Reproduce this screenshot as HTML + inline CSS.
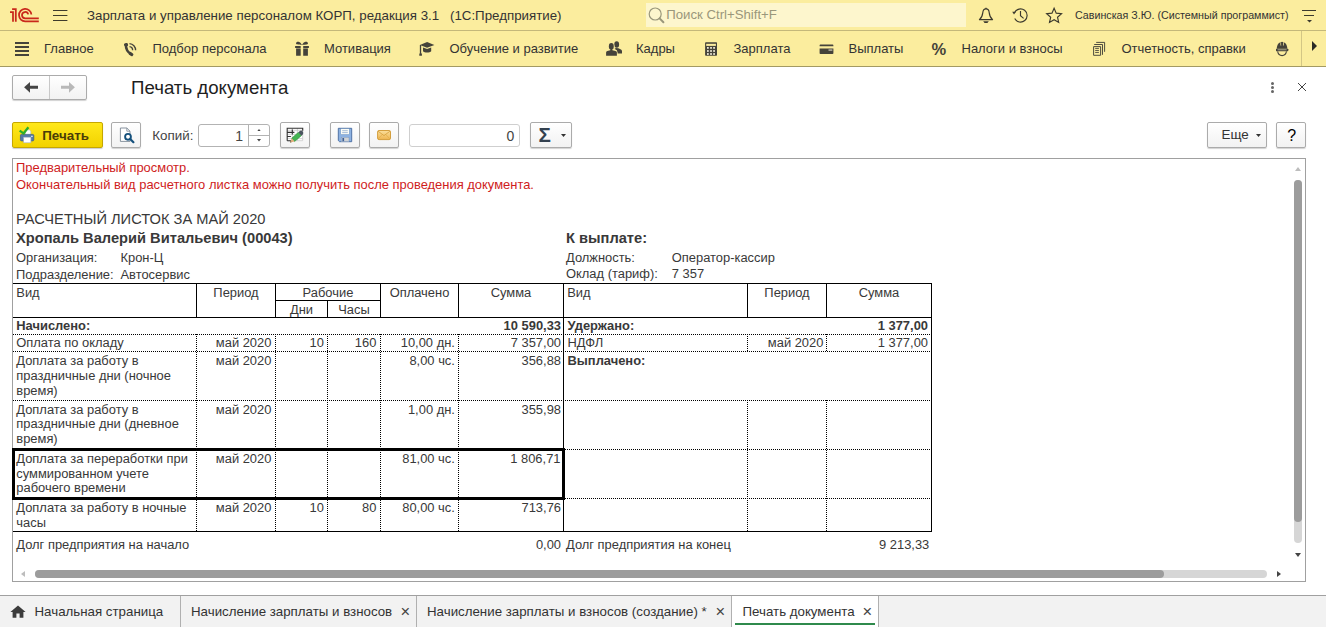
<!DOCTYPE html>
<html lang="ru">
<head>
<meta charset="utf-8">
<title>Печать документа</title>
<style>
*{box-sizing:border-box;margin:0;padding:0}
html,body{width:1326px;height:627px;overflow:hidden;background:#fff}
body{font-family:"Liberation Sans",Arial,sans-serif;color:#333;position:relative;font-size:13px}
.abs{position:absolute}
.t{position:absolute;white-space:nowrap;line-height:1}
/* top bars */
#top{position:absolute;left:0;top:0;width:1326px;height:30px;background:#fbed9e}
#topline{position:absolute;left:0;top:30px;width:1326px;height:1px;background:#c4b87a}
#nav{position:absolute;left:0;top:31px;width:1326px;height:35px;background:#fbed9e}
#navline{position:absolute;left:0;top:66px;width:1326px;height:1px;background:#a39a63}
#search{position:absolute;left:646px;top:3px;width:320px;height:24px;background:#fdf6cd}
.nt{position:absolute;white-space:nowrap;font-size:13px;line-height:15px;top:41px;color:#333}
/* buttons */
.btn{position:absolute;border:1px solid #ababab;border-radius:2px;background:linear-gradient(#ffffff,#f2f2f2);box-shadow:0 1px 1px rgba(0,0,0,.18)}
.inp{position:absolute;border:1px solid #b3b3b3;border-radius:3px;background:#fff}
/* doc */
#panel{position:absolute;left:12px;top:158px;width:1294px;height:424px;border:1px solid #a0a0a0;background:#fff}
.d{position:absolute;white-space:nowrap;font-size:12.92px;line-height:15px;color:#393939}
.r{text-align:right}
.b{font-weight:bold}
.hl{position:absolute;height:1px;background:#000}
.vl{position:absolute;width:1px;background:#000}
.hd{position:absolute;height:1px;background-image:linear-gradient(90deg,#000 50%,transparent 50%);background-size:2px 1px}
.vd{position:absolute;width:1px;background-image:linear-gradient(180deg,#000 50%,transparent 50%);background-size:1px 2px}
/* tabs */
#tabs{position:absolute;left:0;top:595px;width:1326px;height:32px;background:#f2f2f2;border-top:1px solid #a0a0a0}
.tt{position:absolute;white-space:nowrap;font-size:13.3px;line-height:15px;top:604px;color:#333}
.tx{position:absolute;white-space:nowrap;font-size:16.5px;line-height:16px;top:603.3px;color:#444}
.tdiv{position:absolute;top:596px;width:1px;height:31px;background:#b0b0b0}
</style>
</head>
<body>
<!-- TOP BAR -->
<div id="top"></div><div id="topline"></div>
<div id="nav"></div><div id="navline"></div>
<div id="search"></div>

<!-- TOPBAR-CONTENT -->
<svg class="abs" style="left:9px;top:7px" width="32" height="16" viewBox="0 0 32 16">
 <g fill="none" stroke="#c9281b" stroke-width="1.75">
  <path d="M3.1 2 H6.8 V14.75"/>
  <path d="M1 5.05 H4 V14.75"/>
  <path d="M22.37 7.5 A6.2 6.2 0 1 0 16.2 14.3 H29.8"/>
  <path d="M19.2 7.39 A3.15 3.15 0 1 0 16.15 11.3 H29.8"/>
 </g>
</svg>
<svg class="abs" style="left:53px;top:8px" width="15" height="15" viewBox="0 0 15 15"><path d="M0 2.5 H14.4 M0 7.5 H14.4 M0 12.5 H14.4" stroke="#3e3b2c" stroke-width="1.15"/></svg>
<div class="t" style="left:87px;top:8px;font-size:13.3px;line-height:15px;color:#333">Зарплата и управление персоналом КОРП, редакция 3.1</div>
<div class="t" style="left:450px;top:8px;font-size:13.3px;line-height:15px;color:#333">(1С:Предприятие)</div>
<svg class="abs" style="left:648px;top:5.5px" width="18" height="18" viewBox="0 0 18 18"><circle cx="7.2" cy="8" r="6" fill="none" stroke="#9a977b" stroke-width="1.2"/><path d="M11.6 12.4 L15.4 16.2" stroke="#9a977b" stroke-width="2" stroke-linecap="round"/></svg>
<div class="t" style="left:666.3px;top:6.8px;font-size:13.2px;line-height:15px;color:#9a977b">Поиск Ctrl+Shift+F</div>
<!-- bell -->
<svg class="abs" style="left:977px;top:7px" width="18" height="18" viewBox="0 0 18 18"><path d="M9 1.9 C6.9 1.9 6 3.4 5.8 5.6 C5.5 8.8 4.9 10.6 2.4 12.6 L15.6 12.6 C13.1 10.6 12.5 8.8 12.2 5.6 C12 3.4 11.1 1.9 9 1.9 Z" fill="none" stroke="#3c3a2e" stroke-width="1.15" stroke-linejoin="round"/><path d="M9 0.8 V2" stroke="#3c3a2e" stroke-width="1.3"/><path d="M6.2 14.3 L11.8 14.3 L10.4 16 L7.6 16 Z" fill="#3c3a2e"/></svg>
<!-- history -->
<svg class="abs" style="left:1011px;top:6px" width="20" height="20" viewBox="0 0 20 20"><path d="M3.6 6.6 A6.6 6.6 0 1 1 3.7 12.6" fill="none" stroke="#3c3a2e" stroke-width="1.15"/><path d="M1.2 5.8 L5 5.8 L3 8.6 Z" fill="#3c3a2e"/><path d="M9.5 5 L9.5 9.8 L12.6 12.4" fill="none" stroke="#3c3a2e" stroke-width="1.15"/></svg>
<!-- star -->
<svg class="abs" style="left:1045px;top:6px" width="19" height="19" viewBox="0 0 19 19"><path d="M9.10 2.30 L11.22 7.19 L16.52 7.69 L12.52 11.21 L13.68 16.41 L9.10 13.70 L4.52 16.41 L5.68 11.21 L1.68 7.69 L6.98 7.19 Z" fill="none" stroke="#3c3a2e" stroke-width="1.15" stroke-linejoin="miter"/></svg>
<div class="t" style="left:1075px;top:9px;font-size:10.7px;line-height:13px;color:#333">Савинская З.Ю. (Системный программист)</div>
<div class="abs" style="left:1302px;top:10px;width:14px;height:1px;background:#3c3a2e"></div>
<div class="abs" style="left:1304px;top:15px;width:10px;height:1px;background:#3c3a2e"></div>
<svg class="abs" style="left:1306.5px;top:20px" width="5" height="2.6" viewBox="0 0 5 2.6"><path d="M0 0 L5 0 L2.5 2.6 Z" fill="#3c3a2e"/></svg>

<!-- NAV-CONTENT -->
<!-- list icon -->
<div class="abs" style="left:15px;top:42px;width:14px;height:2px;background:#45433a"></div>
<div class="abs" style="left:15px;top:46px;width:14px;height:2px;background:#45433a"></div>
<div class="abs" style="left:15px;top:50px;width:14px;height:2px;background:#45433a"></div>
<div class="abs" style="left:15px;top:54px;width:14px;height:2px;background:#45433a"></div>
<div class="nt" style="left:44px">Главное</div>
<!-- phone -->
<svg class="abs" style="left:123px;top:42px" width="15" height="15" viewBox="0 0 15 15"><path d="M3 2.8 Q2.6 8.6 8 12" fill="none" stroke="#45433a" stroke-width="2.5" stroke-linecap="round"/><rect x="1.1" y="1.2" width="3.9" height="3.1" rx="1" fill="#45433a" transform="rotate(-18 3 2.8)"/><rect x="5.7" y="10.5" width="4.7" height="3.1" rx="1.1" fill="#45433a" transform="rotate(32 8 12)"/><path d="M6.5 1.6 A6.5 6.5 0 0 1 12.6 8.3" fill="none" stroke="#45433a" stroke-width="1.35"/><path d="M6.5 4.6 A3.5 3.5 0 0 1 9.6 8.2" fill="none" stroke="#45433a" stroke-width="1.35"/></svg>
<div class="nt" style="left:152.5px">Подбор персонала</div>
<!-- gift -->
<svg class="abs" style="left:295px;top:41px" width="14" height="15" viewBox="0 0 14 15"><path d="M0.1 4.9 H5.7 V6.9 H0.1 Z M8.2 4.9 H13.9 V6.9 H8.2 Z M1.1 7.7 H5.7 V14.7 H1.1 Z M8.2 7.7 H12.9 V14.7 H8.2 Z" fill="#45433a"/><path d="M1.1 6.9 H5.7 V7.7 H1.1 Z M8.2 6.9 H12.9 V7.7 H8.2 Z" fill="#45433a" opacity="0.55"/><path d="M6.9 3.9 C5.4 3.9 1 4 1 2.3 C1 0.6 3 0.4 4.2 0.9 C5.6 1.5 6.4 2.8 6.9 3.9 Z M7.1 3.9 C8.6 3.9 13 4 13 2.3 C13 0.6 11 0.4 9.8 0.9 C8.4 1.5 7.6 2.8 7.1 3.9 Z" fill="#45433a"/></svg>
<div class="nt" style="left:324px">Мотивация</div>
<!-- grad cap -->
<svg class="abs" style="left:418px;top:41px" width="17" height="15" viewBox="0 0 17 15"><path d="M1.9 3.9 L9.1 1 L16.4 3.9 L9.1 6.8 Z" fill="#45433a"/><path d="M5 6.4 L9.1 8 L13.2 6.4 L13.2 10.2 C12 11.9 6.2 11.9 5 10.2 Z" fill="#45433a"/><path d="M2.5 4 L2.5 12.4" stroke="#45433a" stroke-width="1.3"/><path d="M1.3 14.7 L1.3 12.8 Q2.6 11.4 3.9 12.8 L3.9 14.7 Z" fill="#45433a"/></svg>
<div class="nt" style="left:449.5px">Обучение и развитие</div>
<!-- people -->
<svg class="abs" style="left:606px;top:41px" width="17" height="15" viewBox="0 0 17 15"><ellipse cx="10.7" cy="3.5" rx="2.4" ry="3.3" fill="#45433a"/><path d="M8.6 7.8 L10 7 L12.4 7.2 L15 8.4 Q16 8.9 16 10.2 V12.6 H11 V9.6 Z" fill="#45433a"/><g stroke="#fbed9e" stroke-width="1.4" paint-order="stroke"><ellipse cx="5.3" cy="5.4" rx="2.45" ry="3.3" fill="#45433a"/><path d="M0.1 14.7 V11.6 Q0.1 10.4 1.4 10 L4.2 9.2 L6.4 9.2 L9.4 10 Q10.9 10.4 10.9 11.6 V14.7 Z" fill="#45433a"/></g><rect x="4.3" y="8" width="2" height="2" fill="#45433a"/></svg>
<div class="nt" style="left:636px">Кадры</div>
<!-- calculator -->
<svg class="abs" style="left:705px;top:42px" width="13" height="14" viewBox="0 0 13 14"><rect x="0.1" y="0.2" width="11.9" height="13.5" rx="0.8" fill="#45433a"/><rect x="1.2" y="1.8" width="9.7" height="2.1" fill="#fbed9e"/><rect x="2.0" y="5.1" width="1.75" height="1.6" fill="#fffbe6"/><rect x="2.0" y="8.2" width="1.75" height="1.6" fill="#fffbe6"/><rect x="2.0" y="11.2" width="1.75" height="1.6" fill="#fffbe6"/><rect x="5.15" y="5.1" width="1.75" height="1.6" fill="#fffbe6"/><rect x="5.15" y="8.2" width="1.75" height="1.6" fill="#fffbe6"/><rect x="5.15" y="11.2" width="1.75" height="1.6" fill="#fffbe6"/><rect x="8.2" y="5.1" width="1.75" height="1.6" fill="#fffbe6"/><rect x="8.2" y="8.2" width="1.75" height="1.6" fill="#fffbe6"/><rect x="8.2" y="11.2" width="1.75" height="1.6" fill="#fffbe6"/></svg>
<div class="nt" style="left:733.5px">Зарплата</div>
<!-- card -->
<svg class="abs" style="left:818.5px;top:43.5px" width="15" height="11" viewBox="0 0 15 11"><path d="M1.4 0.6 H13.6 Q14.4 0.6 14.4 1.4 V2.2 H0.6 V1.4 Q0.6 0.6 1.4 0.6 Z M0.6 4.5 H14.4 V9.3 Q14.4 10.1 13.6 10.1 H1.4 Q0.6 10.1 0.6 9.3 Z" fill="#45433a"/><rect x="9.5" y="5.6" width="3.9" height="0.9" fill="#fffbe6"/></svg>
<div class="nt" style="left:848.5px">Выплаты</div>
<div class="t" style="left:931.5px;top:40px;font-size:16.5px;line-height:18px;font-weight:bold;color:#45433a">%</div>
<div class="nt" style="left:961.5px">Налоги и взносы</div>
<!-- docs -->
<svg class="abs" style="left:1092px;top:41px" width="14" height="15" viewBox="0 0 14 15"><g fill="none" stroke="#45433a" stroke-width="0.95"><path d="M4.2 1.4 H12.6 V10.8"/><path d="M2.2 3.5 H10.5 V13.8"/><path d="M1.6 5.6 H8.6 V14.3 H1.6 Z"/><path d="M3.2 7.4 H6.9 M3.2 9.45 H6.9 M3.2 11.45 H6.9" stroke-width="0.9"/></g></svg>
<div class="nt" style="left:1121.5px">Отчетность, справки</div>
<!-- helmet -->
<svg class="abs" style="left:1276px;top:41px" width="13" height="16" viewBox="0 0 13 16"><path d="M0.8 7.8 C0.8 3.6 3 1.1 6.05 1.1 C9.1 1.1 11.3 3.6 11.3 7.8 Z" fill="#45433a"/><path d="M4.8 1.2 V4.5 M7.45 1.2 V4.5" stroke="#fbed9e" stroke-width="0.8"/><rect x="5.3" y="0.9" width="1.7" height="3" fill="#45433a"/><path d="M0.4 7.7 H11.8 Q12.3 7.7 12.3 8.3 V9.6 Q12.3 10.2 11.8 10.2 H0.4 Q-0.1 10.2 -0.1 9.6 V8.3 Q-0.1 7.7 0.4 7.7 Z" fill="#45433a"/><rect x="1.6" y="8.45" width="9" height="0.75" fill="#c9c3a4"/><path d="M1.6 10.4 C2.2 13.2 4 14.6 6.05 14.6 C8.1 14.6 9.9 13.2 10.5 10.4" fill="none" stroke="#45433a" stroke-width="1.1"/></svg>
<div class="abs" style="left:1301px;top:31px;width:1px;height:35px;background:#d3c685"></div>
<svg class="abs" style="left:1312px;top:41px" width="5" height="10" viewBox="0 0 5 10"><path d="M0 0 L5 5 L0 10 Z" fill="#2a2a26"/></svg>

<!-- FORM-HEADER -->
<div class="btn" style="left:12px;top:75px;width:75px;height:25px"></div>
<div class="abs" style="left:49px;top:76px;width:1px;height:23px;background:#c8c8c8"></div>
<svg class="abs" style="left:24px;top:82px" width="14" height="11" viewBox="0 0 14 11"><path d="M6 0 L0.1 5.35 L6 10.7 L6 6.85 L14 6.85 L14 3.85 L6 3.85 Z" fill="#444"/></svg>
<svg class="abs" style="left:60.8px;top:82px" width="14" height="11" viewBox="0 0 14 11"><path d="M8 0 L13.9 5.35 L8 10.7 L8 6.85 L0 6.85 L0 3.85 L8 3.85 Z" fill="#b8b8b8"/></svg>
<div class="t" style="left:131px;top:76.7px;font-size:18.67px;line-height:21px;color:#1e1e1e">Печать документа</div>
<div class="abs" style="left:1271px;top:82px;width:3px;height:3px;border-radius:50%;background:#666"></div>
<div class="abs" style="left:1271px;top:86px;width:3px;height:3px;border-radius:50%;background:#666"></div>
<div class="abs" style="left:1271px;top:90px;width:3px;height:3px;border-radius:50%;background:#666"></div>
<svg class="abs" style="left:1297px;top:82px" width="10" height="10" viewBox="0 0 10 10"><path d="M1 1 L9 9 M9 1 L1 9" stroke="#444" stroke-width="1"/></svg>

<!-- TOOLBAR -->
<div class="abs" style="left:12px;top:122px;width:91px;height:26px;border:1px solid #c6a700;border-radius:2px;background:linear-gradient(#ffe81a,#f2d200);box-shadow:0 1px 1px rgba(0,0,0,.2)"></div>
<!-- printer icon -->
<svg class="abs" style="left:19px;top:126px" width="16" height="18" viewBox="0 0 16 18">
 <path d="M6.2 3.8 H10.4 L11.8 5.2 V9.4 H6.2 Z" fill="#fff" stroke="#a8b4c2" stroke-width="0.6"/>
 <path d="M2.5 8.4 H13.7 Q14.8 8.4 14.8 9.5 V13.8 Q14.8 14.9 13.7 14.9 H2.5 Q1.4 14.9 1.4 13.8 V9.5 Q1.4 8.4 2.5 8.4 Z" fill="#5479a8" stroke="#3b5b86" stroke-width="0.7"/>
 <rect x="4.7" y="11.2" width="7.2" height="5.6" fill="#fff" stroke="#a8b4c2" stroke-width="0.6"/>
 <rect x="12" y="9.8" width="1.8" height="1.1" fill="#d6e4f4"/>
 <path d="M0.6 4.6 L4.6 7.4 L9.4 1.2" fill="none" stroke="#2cae28" stroke-width="2.3"/>
</svg>
<div class="t" style="left:42.2px;top:128px;font-size:13.4px;line-height:15px;font-weight:bold;color:#4a3c08">Печать</div>
<div class="btn" style="left:111px;top:122px;width:30px;height:26px"></div>
<svg class="abs" style="left:119px;top:127px" width="17" height="17" viewBox="0 0 17 17">
 <path d="M1.4 1 H7.8 L11 4.2 V14.4 H1.4 Z" fill="#fff" stroke="#7b8794" stroke-width="0.9"/>
 <path d="M7.8 1 V4.2 H11" fill="none" stroke="#7b8794" stroke-width="0.8"/>
 <circle cx="9" cy="9.8" r="2.9" fill="#fff" stroke="#14507c" stroke-width="1.9"/>
 <path d="M11.2 12 L14.4 15.2" stroke="#14507c" stroke-width="2.2" stroke-linecap="round"/>
</svg>
<div class="t" style="left:152.3px;top:128px;font-size:13.4px;line-height:15px;color:#444">Копий:</div>
<div class="inp" style="left:198px;top:124px;width:72px;height:23px"></div>
<div class="abs" style="left:248px;top:125px;width:1px;height:21px;background:#b3b3b3"></div>
<div class="abs" style="left:249px;top:135px;width:20px;height:1px;background:#b3b3b3"></div>
<div class="t" style="left:200px;top:127.5px;width:43px;text-align:right;font-size:14px;line-height:16px;color:#444">1</div>
<svg class="abs" style="left:256.5px;top:128.5px" width="4" height="2.5" viewBox="0 0 4 2.5"><path d="M0 2.5 L2 0 L4 2.5 Z" fill="#444"/></svg>
<svg class="abs" style="left:256.5px;top:139px" width="4" height="2.5" viewBox="0 0 4 2.5"><path d="M0 0 L4 0 L2 2.5 Z" fill="#444"/></svg>
<div class="btn" style="left:280px;top:122px;width:30px;height:26px"></div>
<div class="btn" style="left:330px;top:122px;width:30px;height:26px"></div>
<div class="btn" style="left:369px;top:122px;width:30px;height:26px"></div>
<div class="inp" style="left:409px;top:124px;width:111px;height:23px;border-color:#cfcfcf"></div>
<div class="t" style="left:420px;top:127.5px;width:94.3px;text-align:right;font-size:14px;line-height:16px;color:#444">0</div>
<div class="btn" style="left:530px;top:122px;width:42px;height:26px"></div>
<div class="t" style="left:538.4px;top:124.2px;font-size:20.6px;line-height:22px;font-weight:bold;color:#33414f">Σ</div>
<svg class="abs" style="left:560.8px;top:134px" width="5" height="3" viewBox="0 0 5 3"><path d="M0 0 L5 0 L2.5 3 Z" fill="#333"/></svg>
<!-- toolbar icons -->
<svg class="abs" style="left:286px;top:126px" width="18" height="18" viewBox="0 0 18 18">
 <rect x="1.2" y="2.2" width="15.5" height="12.5" fill="#fff"/>
 <path d="M1.2 4.3 H16.7 M1.2 8.4 H16.7 M1.2 12.6 H16.7 M11.35 2.2 V14.7 M6.3 2.2 V14.7 M16.7 2.2 V14.7 M1.2 14.7 H16.7" stroke="#c9c9c9" stroke-width="0.8" fill="none"/>
 <path d="M1.2 14.7 V2.2 H16.7 V4.8 M1.2 14.7 H5 M1.2 6.4 H8.4 M1.2 10.5 H4.9 M6.3 3.5 V8.4" fill="none" stroke="#333" stroke-width="1.1"/>
 <path d="M5.68 12.22 L12.48 6.31 L15.36 9.63 L8.56 15.54 Z" fill="#45b552" stroke="#2e8a3a" stroke-width="0.6"/>
 <path d="M12.48 6.31 L14.1 4.87 Q15.6 4 16.6 5.2 Q17.8 6.6 17 8.2 L15.36 9.63 Z" fill="#4b5560"/>
 <path d="M5.68 12.22 L8.56 15.54 L4.1 16.5 Z" fill="#e2b07c"/>
 <path d="M4.1 16.5 L4.6 15.1 L5.5 16.2 Z" fill="#4a3a2a"/>
</svg>
<svg class="abs" style="left:337px;top:127px" width="16" height="16" viewBox="0 0 16 16">
 <path d="M1.3 1.3 H14.7 V14.7 H2.5 L1.3 13.5 Z" fill="#8db2e2" stroke="#45699e" stroke-width="0.9"/>
 <rect x="3.8" y="1.8" width="8.4" height="5.6" fill="#fbfcf6" stroke="#6f8fba" stroke-width="0.4"/>
 <path d="M5.2 3.7 H10.8 M5.2 5.6 H10.8" stroke="#9db6d4" stroke-width="0.9"/>
 <rect x="4.2" y="10.2" width="7.8" height="4.5" fill="#d2d4d6" stroke="#6f8fba" stroke-width="0.4"/>
 <rect x="5.4" y="11" width="1.7" height="3.2" fill="#3f6096"/>
</svg>
<svg class="abs" style="left:376px;top:129px" width="16" height="12" viewBox="0 0 16 12">
 <defs><linearGradient id="mg" x1="0" y1="0" x2="0" y2="1"><stop offset="0" stop-color="#fadf9c"/><stop offset="1" stop-color="#eeb550"/></linearGradient></defs>
 <rect x="1.6" y="1.5" width="12.9" height="9.1" rx="1.3" fill="url(#mg)" stroke="#cf962f" stroke-width="0.9"/>
 <path d="M2 2.2 L8 6.6 L14 2.2" fill="none" stroke="#cf962f" stroke-width="0.7"/>
 <path d="M2 10 L6.2 5.6 M14 10 L9.8 5.6" stroke="#dfa843" stroke-width="0.6"/>
</svg>
<div class="btn" style="left:1207px;top:122px;width:60px;height:26px"></div>
<div class="t" style="left:1221.5px;top:127.4px;font-size:13.4px;line-height:16px;color:#333">Еще</div>
<svg class="abs" style="left:1255.7px;top:134.3px" width="5" height="3" viewBox="0 0 5 3"><path d="M0 0 L5 0 L2.5 3 Z" fill="#333"/></svg>
<div class="btn" style="left:1276px;top:122px;width:30px;height:26px"></div>
<div class="t" style="left:1287.2px;top:126.8px;font-size:16px;line-height:17px;color:#000">?</div>

<!-- PANEL -->
<div id="panel"></div>

<!-- DOC -->
<div class="d" style="top:160.01px;left:16.00px;font-size:12.95px;color:#cf1d1d;">Предварительный просмотр.</div>
<div class="d" style="top:176.71px;left:16.00px;font-size:12.95px;color:#cf1d1d;">Окончательный вид расчетного листка можно получить после проведения документа.</div>
<div class="d" style="top:211.42px;left:16.00px;font-size:14.67px;line-height:17px;">РАСЧЕТНЫЙ ЛИСТОК ЗА МАЙ 2020</div>
<div class="d" style="top:229.92px;left:16.00px;font-size:14.67px;line-height:17px;font-weight:bold;">Хропаль Валерий Витальевич (00043)</div>
<div class="d" style="top:250.02px;left:16.00px;">Организация:</div>
<div class="d" style="top:250.02px;left:120.50px;">Крон-Ц</div>
<div class="d" style="top:266.72px;left:16.00px;">Подразделение:</div>
<div class="d" style="top:266.72px;left:120.50px;">Автосервис</div>
<div class="d" style="top:230.22px;left:566.00px;font-size:14.67px;line-height:17px;font-weight:bold;">К выплате:</div>
<div class="d" style="top:250.02px;left:566.00px;">Должность:</div>
<div class="d" style="top:250.02px;left:671.80px;">Оператор-кассир</div>
<div class="d" style="top:266.32px;left:566.00px;">Оклад (тариф):</div>
<div class="d" style="top:266.32px;left:671.80px;">7 357</div>
<div class="d" style="top:285.02px;left:16.30px;">Вид</div>
<div class="d" style="top:285.02px;left:86.00px;width:300px;text-align:center;">Период</div>
<div class="d" style="top:285.02px;left:178.00px;width:300px;text-align:center;">Рабочие</div>
<div class="d" style="top:302.02px;left:151.50px;width:300px;text-align:center;">Дни</div>
<div class="d" style="top:302.02px;left:204.00px;width:300px;text-align:center;">Часы</div>
<div class="d" style="top:285.02px;left:269.50px;width:300px;text-align:center;">Оплачено</div>
<div class="d" style="top:285.02px;left:361.00px;width:300px;text-align:center;">Сумма</div>
<div class="d" style="top:285.02px;left:567.20px;">Вид</div>
<div class="d" style="top:285.02px;left:637.00px;width:300px;text-align:center;">Период</div>
<div class="d" style="top:285.02px;left:729.00px;width:300px;text-align:center;">Сумма</div>
<div class="d" style="top:317.52px;left:16.30px;font-weight:bold;">Начислено:</div>
<div class="d" style="top:317.52px;left:261.00px;width:300px;text-align:right;font-weight:bold;">10 590,33</div>
<div class="d" style="top:317.52px;left:567.50px;font-weight:bold;">Удержано:</div>
<div class="d" style="top:317.52px;left:628.00px;width:300px;text-align:right;font-weight:bold;">1 377,00</div>
<div class="d" style="top:335.02px;left:16.30px;">Оплата по окладу</div>
<div class="d" style="top:335.02px;left:-28.60px;width:300px;text-align:right;">май 2020</div>
<div class="d" style="top:335.02px;left:23.90px;width:300px;text-align:right;">10</div>
<div class="d" style="top:335.02px;left:76.40px;width:300px;text-align:right;">160</div>
<div class="d" style="top:335.02px;left:154.90px;width:300px;text-align:right;">10,00 дн.</div>
<div class="d" style="top:335.02px;left:261.00px;width:300px;text-align:right;">7 357,00</div>
<div class="d" style="top:335.02px;left:567.50px;">НДФЛ</div>
<div class="d" style="top:335.02px;left:523.40px;width:300px;text-align:right;">май 2020</div>
<div class="d" style="top:335.02px;left:628.00px;width:300px;text-align:right;">1 377,00</div>
<div class="d" style="top:353.32px;left:16.30px;">Доплата за работу в</div>
<div class="d" style="top:368.02px;left:16.30px;">праздничные дни (ночное</div>
<div class="d" style="top:382.72px;left:16.30px;">время)</div>
<div class="d" style="top:353.32px;left:-28.60px;width:300px;text-align:right;">май 2020</div>
<div class="d" style="top:353.32px;left:154.90px;width:300px;text-align:right;">8,00 чс.</div>
<div class="d" style="top:353.32px;left:261.00px;width:300px;text-align:right;">356,88</div>
<div class="d" style="top:353.32px;left:567.50px;font-weight:bold;">Выплачено:</div>
<div class="d" style="top:401.52px;left:16.30px;">Доплата за работу в</div>
<div class="d" style="top:416.42px;left:16.30px;">праздничные дни (дневное</div>
<div class="d" style="top:431.42px;left:16.30px;">время)</div>
<div class="d" style="top:401.52px;left:-28.60px;width:300px;text-align:right;">май 2020</div>
<div class="d" style="top:401.52px;left:154.90px;width:300px;text-align:right;">1,00 дн.</div>
<div class="d" style="top:401.52px;left:261.00px;width:300px;text-align:right;">355,98</div>
<div class="d" style="top:451.02px;left:16.30px;">Доплата за переработки при</div>
<div class="d" style="top:465.72px;left:16.30px;">суммированном учете</div>
<div class="d" style="top:480.32px;left:16.30px;">рабочего времени</div>
<div class="d" style="top:451.02px;left:-28.60px;width:300px;text-align:right;">май 2020</div>
<div class="d" style="top:451.02px;left:154.90px;width:300px;text-align:right;">81,00 чс.</div>
<div class="d" style="top:451.02px;left:260.50px;width:300px;text-align:right;">1 806,71</div>
<div class="d" style="top:499.82px;left:16.30px;">Доплата за работу в ночные</div>
<div class="d" style="top:515.02px;left:16.30px;">часы</div>
<div class="d" style="top:499.82px;left:-28.60px;width:300px;text-align:right;">май 2020</div>
<div class="d" style="top:499.82px;left:23.90px;width:300px;text-align:right;">10</div>
<div class="d" style="top:499.82px;left:76.40px;width:300px;text-align:right;">80</div>
<div class="d" style="top:499.82px;left:154.90px;width:300px;text-align:right;">80,00 чс.</div>
<div class="d" style="top:499.82px;left:261.00px;width:300px;text-align:right;">713,76</div>
<div class="d" style="top:536.82px;left:16.30px;">Долг предприятия на начало</div>
<div class="d" style="top:536.82px;left:261.00px;width:300px;text-align:right;">0,00</div>
<div class="d" style="top:536.82px;left:566.00px;">Долг предприятия на конец</div>
<div class="d" style="top:536.82px;left:629.30px;width:300px;text-align:right;">9 213,33</div>
<div class="hl" style="left:13px;top:283px;width:919px"></div>
<div class="hl" style="left:13px;top:317px;width:919px"></div>
<div class="hl" style="left:13px;top:531px;width:919px"></div>
<div class="hl" style="left:275px;top:300px;width:106px"></div>
<div class="vl" style="left:196px;top:283px;height:35px"></div>
<div class="vl" style="left:275px;top:283px;height:35px"></div>
<div class="vl" style="left:380px;top:283px;height:35px"></div>
<div class="vl" style="left:458px;top:283px;height:35px"></div>
<div class="vl" style="left:747px;top:283px;height:35px"></div>
<div class="vl" style="left:826px;top:283px;height:35px"></div>
<div class="vl" style="left:327px;top:300px;height:18px"></div>
<div class="vl" style="left:563px;top:283px;height:249px"></div>
<div class="vl" style="left:931px;top:283px;height:249px"></div>
<div class="hd" style="left:13px;top:334px;width:918px"></div>
<div class="hd" style="left:13px;top:351px;width:918px"></div>
<div class="hd" style="left:13px;top:400px;width:918px"></div>
<div class="hd" style="left:563px;top:449px;width:368px"></div>
<div class="hd" style="left:563px;top:498px;width:368px"></div>
<div class="vd" style="left:196px;top:334px;height:197px"></div>
<div class="vd" style="left:275px;top:334px;height:197px"></div>
<div class="vd" style="left:327px;top:334px;height:197px"></div>
<div class="vd" style="left:380px;top:334px;height:197px"></div>
<div class="vd" style="left:458px;top:334px;height:197px"></div>
<div class="vd" style="left:747px;top:334px;height:17px"></div>
<div class="vd" style="left:747px;top:400px;height:131px"></div>
<div class="vd" style="left:826px;top:334px;height:17px"></div>
<div class="vd" style="left:826px;top:400px;height:131px"></div>
<div class="abs" style="left:12px;top:448px;width:553px;height:52px;border:3px solid #000"></div>
<!-- SCROLLBARS -->
<svg class="abs" style="left:1295px;top:167px" width="6" height="4" viewBox="0 0 6 4"><path d="M0 4 L3 0 L6 4 Z" fill="#bdbdbd"/></svg>
<div class="abs" style="left:1294px;top:180px;width:8px;height:363px;border-radius:4px;background:#d6d6d6"></div>
<div class="abs" style="left:1294px;top:180px;width:8px;height:342px;border-radius:4px;background:#9c9c9c"></div>
<svg class="abs" style="left:1295px;top:553px" width="6" height="4" viewBox="0 0 6 4"><path d="M0 0 L6 0 L3 4 Z" fill="#444"/></svg>
<svg class="abs" style="left:21px;top:571px" width="4" height="6" viewBox="0 0 4 6"><path d="M4 0 L0 3 L4 6 Z" fill="#bdbdbd"/></svg>
<div class="abs" style="left:35px;top:570px;width:1232px;height:8px;border-radius:4px;background:#d6d6d6"></div>
<div class="abs" style="left:35px;top:570px;width:1129px;height:8px;border-radius:4px;background:#9c9c9c"></div>
<svg class="abs" style="left:1277px;top:571px" width="4" height="6" viewBox="0 0 4 6"><path d="M0 0 L4 3 L0 6 Z" fill="#444"/></svg>

<!-- TABS -->
<div id="tabs"></div>
<svg class="abs" style="left:10px;top:605px" width="16" height="13" viewBox="0 0 16 13"><path d="M8 0.4 L0.4 7 L2.6 7 L2.6 12.8 L6.4 12.8 L6.4 8.4 L9.6 8.4 L9.6 12.8 L13.4 12.8 L13.4 7 L15.6 7 Z" fill="#3c3c3c"/></svg>
<div class="tt" style="left:34.5px">Начальная страница</div>
<div class="tdiv" style="left:180px"></div>
<div class="tt" style="left:191px">Начисление зарплаты и взносов</div>
<div class="tx" style="left:400.5px">×</div>
<div class="tdiv" style="left:416px"></div>
<div class="tt" style="left:427px">Начисление зарплаты и взносов (создание) *</div>
<div class="tx" style="left:715.5px">×</div>
<div class="abs" style="left:731px;top:596px;width:148px;height:31px;background:#fff;border-left:1px solid #b0b0b0;border-right:1px solid #b0b0b0"></div>
<div class="tt" style="left:742.5px">Печать документа</div>
<div class="tx" style="left:862.5px">×</div>
<div class="abs" style="left:735px;top:623px;width:140px;height:2px;background:#2f8a4c"></div>

</body>
</html>
